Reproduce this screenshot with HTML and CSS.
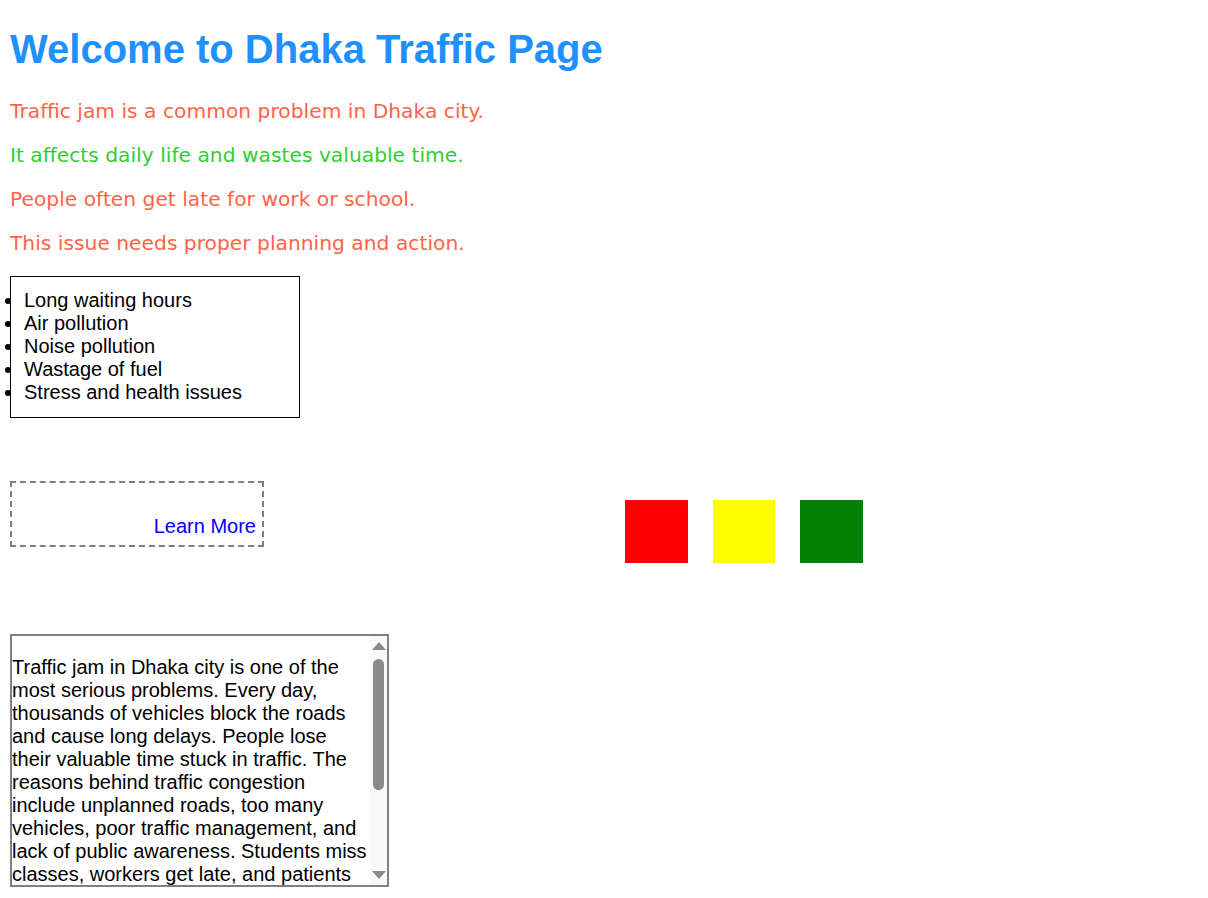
FILE: index.html
```html
<!DOCTYPE html>
<html lang="en">
<head>
<meta charset="utf-8">
<title>Dhaka Traffic</title>
<link rel="stylesheet" href="styles.css">
</head>
<body>
  <h1 class="title">Welcome to Dhaka Traffic Page</h1>
  <p class="line red">Traffic jam is a common problem in Dhaka city.</p>
  <p class="line green">It affects daily life and wastes valuable time.</p>
  <p class="line red">People often get late for work or school.</p>
  <p class="line red">This issue needs proper planning and action.</p>
  <ul class="problems">
    <li>Long waiting hours</li>
    <li>Air pollution</li>
    <li>Noise pollution</li>
    <li>Wastage of fuel</li>
    <li>Stress and health issues</li>
  </ul>
  <div class="row">
    <div class="learn"><a href="#" class="learn-link">Learn More</a></div>
    <div class="lights">
      <div class="light light-red"></div>
      <div class="light light-yellow"></div>
      <div class="light light-green"></div>
    </div>
  </div>
  <div class="scroll-box">
    <div class="scroll-content">
      <p class="scroll-text">Traffic jam in Dhaka city is one of the most serious problems. Every day, thousands of vehicles block the roads and cause long delays. People lose their valuable time stuck in traffic. The reasons behind traffic congestion include unplanned roads, too many vehicles, poor traffic management, and lack of public awareness. Students miss classes, workers get late, and patients cannot reach hospitals on time. To solve this problem, the government should build more flyovers, improve public transport, and enforce traffic rules strictly. Citizens should also follow the rules and be patient on the roads.</p>
    </div>
    <div class="scrollbar" aria-hidden="true">
      <span class="arrow arrow-up"></span>
      <span class="thumb"></span>
      <span class="arrow arrow-down"></span>
    </div>
  </div>
</body>
</html>
```

FILE: styles.css
```css
html, body {
  background: #ffffff;
}

body {
  margin: 0;
  padding: 0 10px;
  font-family: "Liberation Sans", Arial, sans-serif;
  font-size: 20px;
  color: #000;
}

.title {
  margin: 26px 0 0;
  font-family: "Liberation Sans", Arial, sans-serif;
  font-size: 40px;
  font-weight: bold;
  color: #1e90ff;
  line-height: 46px;
}

.line {
  font-family: Verdana, "DejaVu Sans", sans-serif;
  font-size: 20.25px;
  line-height: 24px;
  margin: 0;
  margin-top: 20px;
}

.title + .line {
  margin-top: 27px;
}

.red { color: #ff6347; }
.green { color: #32cd32; }

.problems {
  width: 275px;
  margin: 21px 0 0;
  padding: 12px 0 13px 13px;
  border: 1px solid #000;
  line-height: 23px;
}

.row {
  display: flex;
  align-items: flex-start;
  margin-top: 63px;
}

.learn {
  box-sizing: border-box;
  width: 254px;
  height: 66px;
  border: 2px dashed #808080;
  display: flex;
  justify-content: flex-end;
  align-items: flex-end;
  padding: 0 6px 7px 0;
  line-height: 23px;
}

.learn-link {
  color: #0000ff;
  text-decoration: none;
}

.lights {
  display: flex;
  gap: 25px;
  margin-left: 361px;
  margin-top: 19px;
}

.light {
  width: 62.5px;
  height: 63px;
}
.light-red { background: #ff0000; }
.light-yellow { background: #ffff00; }
.light-green { background: #008000; }

.scroll-box {
  box-sizing: border-box;
  width: 379px;
  height: 253px;
  margin-top: 71px;
  border: 2px solid #808080;
  display: flex;
  overflow: hidden;
}

.scroll-content {
  flex: 1;
  min-width: 0;
  overflow: hidden;
}

.scroll-text {
  margin: 20px 0 20px;
  line-height: 23px;
}

.scrollbar {
  flex: 0 0 17px;
  background: #f9f9f9;
  display: flex;
  flex-direction: column;
  align-items: center;
  padding: 6px 0 6px;
}

.arrow {
  display: block;
  width: 0;
  height: 0;
  border-left: 7px solid transparent;
  border-right: 7px solid transparent;
}

.arrow-up {
  border-bottom: 8px solid #8a8a8a;
}

.arrow-down {
  margin-top: auto;
  border-top: 8px solid #8a8a8a;
}

.thumb {
  display: block;
  width: 11px;
  height: 131px;
  margin-top: 9px;
  background: #8a8a8a;
  border-radius: 6px;
}
```
